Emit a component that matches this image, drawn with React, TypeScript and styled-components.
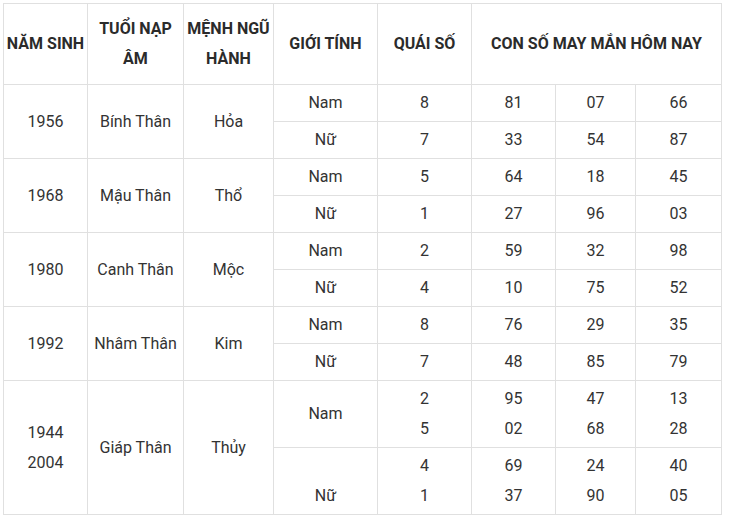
import styled, { createGlobalStyle } from 'styled-components';

interface Row {
    gender: string[]
    quai: string[]
    nums: string[][]
}

interface Group {
    years: string[]
    tuoi: string
    menh: string
    rows: Row[]
}

const groups: Group[] = [
    {
        years: ['1956'], tuoi: 'Bính Thân', menh: 'Hỏa',
        rows: [
            { gender: ['Nam'], quai: ['8'], nums: [['81'], ['07'], ['66']] },
            { gender: ['Nữ'], quai: ['7'], nums: [['33'], ['54'], ['87']] },
        ],
    },
    {
        years: ['1968'], tuoi: 'Mậu Thân', menh: 'Thổ',
        rows: [
            { gender: ['Nam'], quai: ['5'], nums: [['64'], ['18'], ['45']] },
            { gender: ['Nữ'], quai: ['1'], nums: [['27'], ['96'], ['03']] },
        ],
    },
    {
        years: ['1980'], tuoi: 'Canh Thân', menh: 'Mộc',
        rows: [
            { gender: ['Nam'], quai: ['2'], nums: [['59'], ['32'], ['98']] },
            { gender: ['Nữ'], quai: ['4'], nums: [['10'], ['75'], ['52']] },
        ],
    },
    {
        years: ['1992'], tuoi: 'Nhâm Thân', menh: 'Kim',
        rows: [
            { gender: ['Nam'], quai: ['8'], nums: [['76'], ['29'], ['35']] },
            { gender: ['Nữ'], quai: ['7'], nums: [['48'], ['85'], ['79']] },
        ],
    },
    {
        years: ['1944', '2004'], tuoi: 'Giáp Thân', menh: 'Thủy',
        rows: [
            { gender: ['Nam'], quai: ['2', '5'], nums: [['95', '02'], ['47', '68'], ['13', '28']] },
            { gender: ['', 'Nữ'], quai: ['4', '1'], nums: [['69', '37'], ['24', '90'], ['40', '05']] },
        ],
    },
];

const colWidths = [84, 96, 90, 104, 94, 84, 80, 86];

const Lines = ({ items }: { items: string[] }) => (
    <>
        {items.map((t, i) => <Line key={i}>{t || '\u00a0'}</Line>)}
    </>
);

const App = () => {
    return (
        <Page>
            <GlobalStyle />
            <Table>
                <colgroup>
                    {colWidths.map((w, i) => <col key={i} style={{ width: w }} />)}
                </colgroup>
                <thead>
                    <tr>
                        <Th>NĂM SINH</Th>
                        <Th>TUỔI NẠP<br />ÂM</Th>
                        <Th>MỆNH NGŨ<br />HÀNH</Th>
                        <Th>GIỚI TÍNH</Th>
                        <Th>QUÁI SỐ</Th>
                        <Th colSpan={3}>CON SỐ MAY MẮN HÔM NAY</Th>
                    </tr>
                </thead>
                <tbody>
                    {groups.map((g) => g.rows.map((r, ri) => (
                        <tr key={g.tuoi + ri}>
                            {ri === 0 && (
                                <>
                                    <Td rowSpan={2}><Lines items={g.years} /></Td>
                                    <Td rowSpan={2}>{g.tuoi}</Td>
                                    <Td rowSpan={2}>{g.menh}</Td>
                                </>
                            )}
                            <Td><Lines items={r.gender} /></Td>
                            <Td><Lines items={r.quai} /></Td>
                            {r.nums.map((n, ni) => <Td key={ni}><Lines items={n} /></Td>)}
                        </tr>
                    )))}
                </tbody>
            </Table>
        </Page>
    );
}

const GlobalStyle = createGlobalStyle`
    body {
        margin: 0;
        background: #fff;
        font-family: Roboto, "Noto Sans", sans-serif;
        color: #333;
    }
`

const Page = styled.div`
    padding: 3px;
`

const Table = styled.table`
    border-collapse: collapse;
    table-layout: fixed;
    width: 719px;
`

const Th = styled.th`
    border: 1px solid #e0e0e0;
    padding: 10px 0;
    font-size: 16px;
    font-weight: 700;
    line-height: 30px;
    white-space: nowrap;
    color: #2b2b2b;
    text-align: center;
    vertical-align: middle;
`

const Td = styled.td`
    border: 1px solid #e0e0e0;
    padding: 3px 4px;
    font-size: 16px;
    line-height: 30px;
    color: #333;
    text-align: center;
    vertical-align: middle;
`

const Line = styled.span`
    display: block;
`

export default App;
